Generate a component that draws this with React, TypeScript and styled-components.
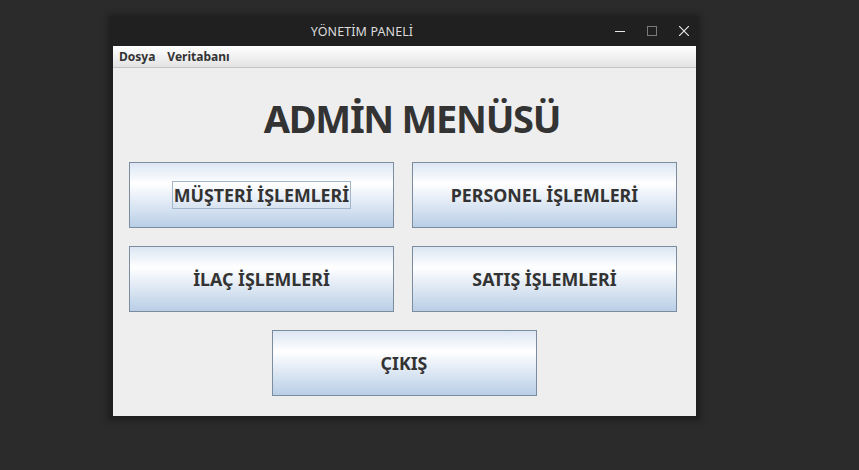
import React from "react";
import styled, {createGlobalStyle} from "styled-components";

const GlobalStyle = createGlobalStyle`
	html, body {
		margin: 0;
		padding: 0;
		background: #2b2b2b;
	}
	body {
		font-family: "Noto Sans", "Open Sans", sans-serif;
	}
`;

const Desktop = styled.div`
	width: 859px;
	height: 470px;
	padding: 16px 0 0 109px;
	box-sizing: border-box;
	background: #2b2b2b;
`;

const Window = styled.div`
	width: 590px;
	background: #202020;
	display: flex;
	flex-direction: column;
	padding: 0 3px 3px 4px;
	box-sizing: border-box;
	box-shadow: 0 0 6px 2px rgba(0, 0, 0, 0.25);
`;

const TitleBar = styled.div`
	height: 30px;
	display: flex;
	align-items: center;
	margin-left: -4px;
	margin-right: -3px;
`;

const Title = styled.div`
	flex: 1;
	text-align: center;
	color: #dcdcdc;
	font-size: 12.5px;
	letter-spacing: 0.1px;
`;

const Controls = styled.div`
	width: 84px;
	display: flex;
	align-items: center;
	gap: 22px;
	box-sizing: border-box;
`;

const ControlIcon = styled.svg`
	width: 10px;
	height: 10px;
	display: block;
`;

const MenuBar = styled.div`
	height: 21px;
	display: flex;
	align-items: center;
	gap: 12px;
	padding-left: 6px;
	background: linear-gradient(to bottom, #ffffff, #e3e3e3);
	border-bottom: 1px solid #c6c6c6;
`;

const MenuItem = styled.span`
	font-size: 12px;
	font-weight: 700;
	color: #333333;
`;

const Content = styled.div`
	height: 348px;
	background: #eeeeee;
	display: flex;
	flex-direction: column;
	padding: 0 18px 0 16px;
	box-sizing: border-box;
`;

const Heading = styled.h1`
	margin: 21px 0 15px 17px;
	height: 58px;
	line-height: 58px;
	text-align: center;
	font-size: 38px;
	letter-spacing: -1.3px;
	font-weight: 700;
	color: #333333;
`;

const ButtonGrid = styled.div`
	display: grid;
	grid-template-columns: 265px 265px;
	grid-auto-rows: 66px;
	column-gap: 18px;
	row-gap: 18px;
	justify-content: start;
	justify-items: center;
`;

const ActionButton = styled.button<{wide?: boolean}>`
	width: 265px;
	height: 66px;
	grid-column: ${({wide}) => (wide ? "1 / span 2" : "auto")};
	margin-left: ${({wide}) => (wide ? "2px" : "0")};
	border: 1px solid #7b8c9e;
	background: linear-gradient(
		to bottom,
		#dbe6f3 0%,
		#ffffff 32%,
		#e7eef7 55%,
		#b9cfe6 100%
	);
	display: flex;
	align-items: center;
	justify-content: center;
	font-family: "Noto Sans", "Open Sans", sans-serif;
	font-size: 17.8px;
	font-weight: 700;
	color: #333333;
	padding: 0;
	cursor: pointer;
`;

const FocusLabel = styled.span<{focused?: boolean}>`
	padding: 1px 1px;
	border: 1px solid ${({focused}) => (focused ? "#a2b6cd" : "transparent")};
	line-height: 24px;
`;

const buttons = [
	{label: "MÜŞTERİ İŞLEMLERİ", focused: true},
	{label: "PERSONEL İŞLEMLERİ"},
	{label: "İLAÇ İŞLEMLERİ"},
	{label: "SATIŞ İŞLEMLERİ"}
];

export default function App() {
	return (
		<>
			<GlobalStyle />
			<Desktop>
				<Window>
					<TitleBar>
						<Title>YÖNETİM PANELİ</Title>
						<Controls>
							<ControlIcon viewBox="0 0 10 10">
								<line x1="0" y1="5.5" x2="10" y2="5.5" stroke="#e6e6e6" strokeWidth="1" />
							</ControlIcon>
							<ControlIcon viewBox="0 0 10 10">
								<rect x="0.5" y="0.5" width="9" height="9" fill="none" stroke="#7a7a7a" strokeWidth="1" />
							</ControlIcon>
							<ControlIcon viewBox="0 0 10 10">
								<path d="M0 0 L10 10 M10 0 L0 10" stroke="#e6e6e6" strokeWidth="1.2" />
							</ControlIcon>
						</Controls>
					</TitleBar>
					<MenuBar>
						<MenuItem>Dosya</MenuItem>
						<MenuItem>Veritabanı</MenuItem>
					</MenuBar>
					<Content>
						<Heading>ADMİN MENÜSÜ</Heading>
						<ButtonGrid>
							{buttons.map((b) => (
								<ActionButton key={b.label}>
									<FocusLabel focused={b.focused}>{b.label}</FocusLabel>
								</ActionButton>
							))}
							<ActionButton wide>
								<FocusLabel>ÇIKIŞ</FocusLabel>
							</ActionButton>
						</ButtonGrid>
					</Content>
				</Window>
			</Desktop>
		</>
	);
}
